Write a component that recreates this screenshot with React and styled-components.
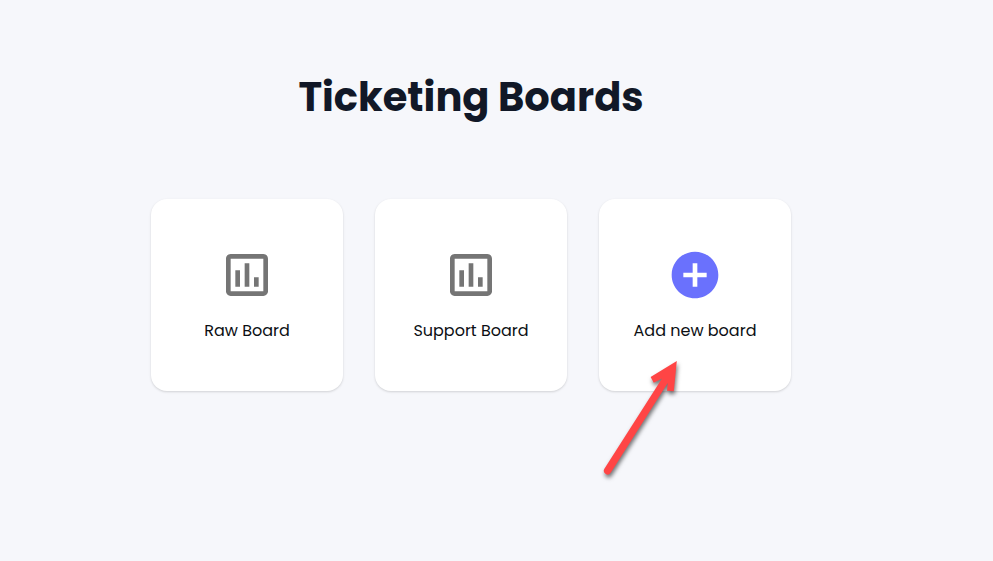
import styled, { createGlobalStyle } from "styled-components";
import { MdAddCircle, MdOutlineAssessment } from "react-icons/md";

const GlobalStyle = createGlobalStyle`
  * {
    box-sizing: border-box;
  }
  body {
    margin: 0;
    background-color: #f6f7fb;
    color: #111827;
    font-family: Poppins, Inter, sans-serif;
    overflow: hidden;
  }
`;

const Container = styled.main`
  width: 942px;
  min-height: 561px;
  padding-top: 67px;
  display: flex;
  flex-direction: column;
  align-items: center;
`;

const Title = styled.h1`
  margin: 0 0 72px;
  font-size: 40px;
  line-height: 60px;
  font-weight: 700;
  white-space: nowrap;
`;

const Boards = styled.div`
  display: flex;
  gap: 32px;
`;

const Card = styled.div`
  position: relative;
  width: 192px;
  height: 192px;
  padding-top: 48px;
  display: flex;
  flex-direction: column;
  align-items: center;
  gap: 16px;
  border-radius: 16px;
  background-color: #fff;
  box-shadow: 0 1px 3px 0 rgba(0, 0, 0, 0.1), 0 1px 2px 0 rgba(0, 0, 0, 0.06);
`;

const Icon = styled.div`
  height: 56px;
  font-size: 56px;
  line-height: 1;
  color: ${(p) => (p.$primary ? "#6a71fd" : "#757575")};
  svg {
    display: block;
  }
`;

const Label = styled.span`
  color: #0c0f14;
  font-size: 16px;
  line-height: 24px;
  white-space: nowrap;
`;

// annotation arrow, hangs over the bottom edge of its card
const Arrow = styled.svg`
  position: absolute;
  left: -9px;
  top: 151px;
  overflow: visible;
  pointer-events: none;
  filter: drop-shadow(1px 3px 2px rgba(0, 0, 0, 0.55));
`;

const boards = ["Raw Board", "Support Board"];

function App() {
  return (
    <>
      <GlobalStyle />
      <Container>
        <Title>Ticketing Boards</Title>
        <Boards>
          {boards.map((name) => (
            <Card key={name}>
              <Icon>
                <MdOutlineAssessment />
              </Icon>
              <Label>{name}</Label>
            </Card>
          ))}
          <Card>
            <Icon $primary>
              <MdAddCircle />
            </Icon>
            <Label>Add new board</Label>
            <Arrow width='110' height='140' viewBox='0 0 110 140'>
              <path
                d='M86.8 11 60.6 27 63.8 32.8 72 28.5 14.4 118.8A3.6 3.6 0 0 0 20.9 122.6L77.7 33 77 40.8 83.8 41.3Z'
                fill='#ff4545'
              />
            </Arrow>
          </Card>
        </Boards>
      </Container>
    </>
  );
}

export default App;
